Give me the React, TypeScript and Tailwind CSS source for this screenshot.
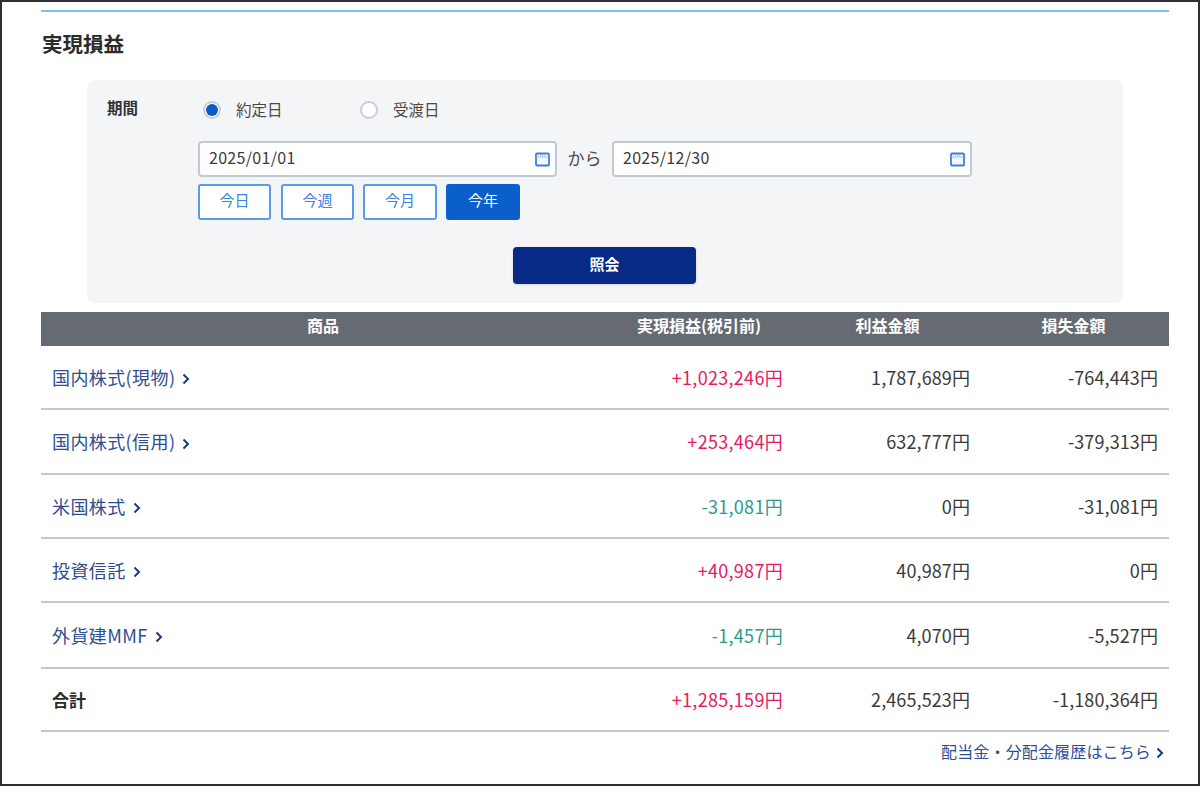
const font = { fontFamily: '"Noto Sans CJK JP", "Noto Sans", sans-serif' }

const rows = [
  { name: "国内株式(現物)", total: "+1,023,246円", gain: "1,787,689円", loss: "-764,443円", height: "h-[64px]" },
  { name: "国内株式(信用)", total: "+253,464円", gain: "632,777円", loss: "-379,313円", height: "h-[65px]" },
  { name: "米国株式", total: "-31,081円", gain: "0円", loss: "-31,081円", height: "h-[64px]" },
  { name: "投資信託", total: "+40,987円", gain: "40,987円", loss: "0円", height: "h-[64px]" },
  { name: "外貨建MMF", total: "-1,457円", gain: "4,070円", loss: "-5,527円", height: "h-[66px]" },
]

function Chevron() {
  return (
    <svg width="8" height="12" viewBox="0 0 8 12" fill="none" className="inline-block mt-[4px]">
      <path d="M1.5 1.5 L6 6 L1.5 10.5" stroke="#1a3a86" strokeWidth="2" />
    </svg>
  )
}

function CalendarIcon() {
  return (
    <svg width="15" height="15" viewBox="0 0 15 15" fill="none">
      <rect x="1" y="1.5" width="13" height="12" rx="1" fill="#f2f7fd" stroke="#3a7fdc" strokeWidth="1.8" />
      <path d="M1 5 H14" stroke="#8fb6e8" strokeWidth="0.8" />
      <path d="M5 3.6 H10" stroke="#8fb6e8" strokeWidth="1" strokeDasharray="1 1" />
    </svg>
  )
}

function DateInput({ value, className }: { value: string; className: string }) {
  return (
    <div className={`flex items-center justify-between h-[36px] bg-white border-2 border-[#c2c8d4] rounded-[4px] pl-[9px] pr-[5px] ${className}`}>
      <span className="text-[16px] text-[#3a3a3a] tracking-[0.3px] -mt-[4px]">{value}</span>
      <CalendarIcon />
    </div>
  )
}

function Radio({ checked, label, className }: { checked?: boolean; label: string; className: string }) {
  return (
    <div className={`flex items-center ${className}`}>
      <span className="flex items-center justify-center w-[18px] h-[18px] rounded-full border-2 border-[#c8cdd8] bg-white">
        {checked && <span className="w-[12px] h-[12px] rounded-full bg-[#0a5bc4]" />}
      </span>
      <span className="ml-[15px] text-[15.5px] text-[#4a4a4a] -mt-[1px]">{label}</span>
    </div>
  )
}

function RangeButton({ label, active, className }: { label: string; active?: boolean; className: string }) {
  return (
    <div
      className={`flex items-center justify-center h-[36px] rounded-[3px] border-2 text-[15px] pb-[3px] ${
        active ? "bg-[#0a5fcb] border-[#0a5fcb] text-white" : "bg-white border-[#5b9ae6] text-[#3b82dc]"
      } ${className}`}
    >
      {label}
    </div>
  )
}

export default function App() {
  return (
    <div style={font} className="w-[1200px] h-[786px] bg-white border-2 border-[#2f2f2f] overflow-hidden pt-[8px] pl-[39px]">
      <div className="w-[1128px]">
        <div className="h-[2px] bg-[#7cc0f2]" />
        <h1 className="mt-[17px] ml-[1px] text-[20.5px] leading-[28px] font-bold text-[#2b2b2b]">実現損益</h1>

        {/* Search panel */}
        <div className="mt-[23px] ml-[46px] w-[1036px] h-[223px] bg-[#f4f5f7] rounded-[8px] pt-[18px] pl-[20px]">
          <div className="flex h-[24px] items-center">
            <span className="w-[91px] text-[15.5px] font-bold text-[#333] -mt-[4px]">期間</span>
            <Radio checked label="約定日" className="ml-[5px] w-[157px]" />
            <Radio label="受渡日" className="" />
          </div>
          <div className="flex items-center mt-[19px] ml-[91px]">
            <DateInput value="2025/01/01" className="w-[359px]" />
            <span className="w-[55px] text-center text-[17px] text-[#4a4a4a] -mt-[3px]">から</span>
            <DateInput value="2025/12/30" className="w-[360px]" />
          </div>
          <div className="flex mt-[7px] ml-[91px] gap-[10px]">
            <RangeButton label="今日" className="w-[73px]" />
            <RangeButton label="今週" className="w-[73px]" />
            <RangeButton label="今月" className="w-[74px] -ml-[1px]" />
            <RangeButton label="今年" active className="w-[74px] -ml-[1px]" />
          </div>
          <div className="flex items-center justify-center mt-[27px] ml-[406px] w-[183px] h-[37px] pb-[3px] rounded-[4px] bg-[#062a85] shadow-sm text-white text-[15px] font-bold">
            照会
          </div>
        </div>

        {/* Table */}
        <div className="mt-[9px]">
          <div className="grid grid-cols-[564px_189px_187px_188px] h-[34px] pb-[8px] items-center bg-[#666b73] text-white text-[16px] font-bold text-center">
            <span>商品</span>
            <span className="-ml-[1px]">実現損益(税引前)</span>
            <span>利益金額</span>
            <span className="-ml-[3px]">損失金額</span>
          </div>
          {rows.map((r) => (
            <div
              key={r.name}
              className={`grid grid-cols-[564px_189px_187px_188px] items-center border-b-2 last:border-b-[3px] border-[#c3c8d6] text-[18px] text-right text-[#3a3a3a] ${r.height}`}
            >
              <span className="pl-[11px] text-left text-[#2f4d93] tracking-[0.4px] flex items-center gap-[7px]">
                {r.name}
                <Chevron />
              </span>
              <span className={`pr-[11px] tracking-[0.3px] ${r.total.startsWith("+") ? "text-[#e8195f]" : "text-[#2c9a8c]"}`}>{r.total}</span>
              <span className="pr-[11px] tracking-[0.1px]">{r.gain}</span>
              <span className="pr-[11px] tracking-[0.1px]">{r.loss}</span>
            </div>
          ))}
          <div className="grid grid-cols-[564px_189px_187px_188px] items-center h-[63px] border-b-2 border-[#c3c8d6] text-[18px] text-right text-[#3a3a3a]">
            <span className="pl-[11px] text-left font-bold text-[#2b2b2b] text-[17px]">合計</span>
            <span className="pr-[11px] tracking-[0.3px] text-[#e8195f]">+1,285,159円</span>
            <span className="pr-[11px] tracking-[0.1px]">2,465,523円</span>
            <span className="pr-[11px] tracking-[0.1px]">-1,180,364円</span>
          </div>
          <div className="flex items-center justify-end gap-[5px] mt-[7px] pr-[5px] text-[16px] tracking-[0.15px] text-[#2f4d93]">
            配当金・分配金履歴はこちら
            <Chevron />
          </div>
        </div>
      </div>
    </div>
  )
}
